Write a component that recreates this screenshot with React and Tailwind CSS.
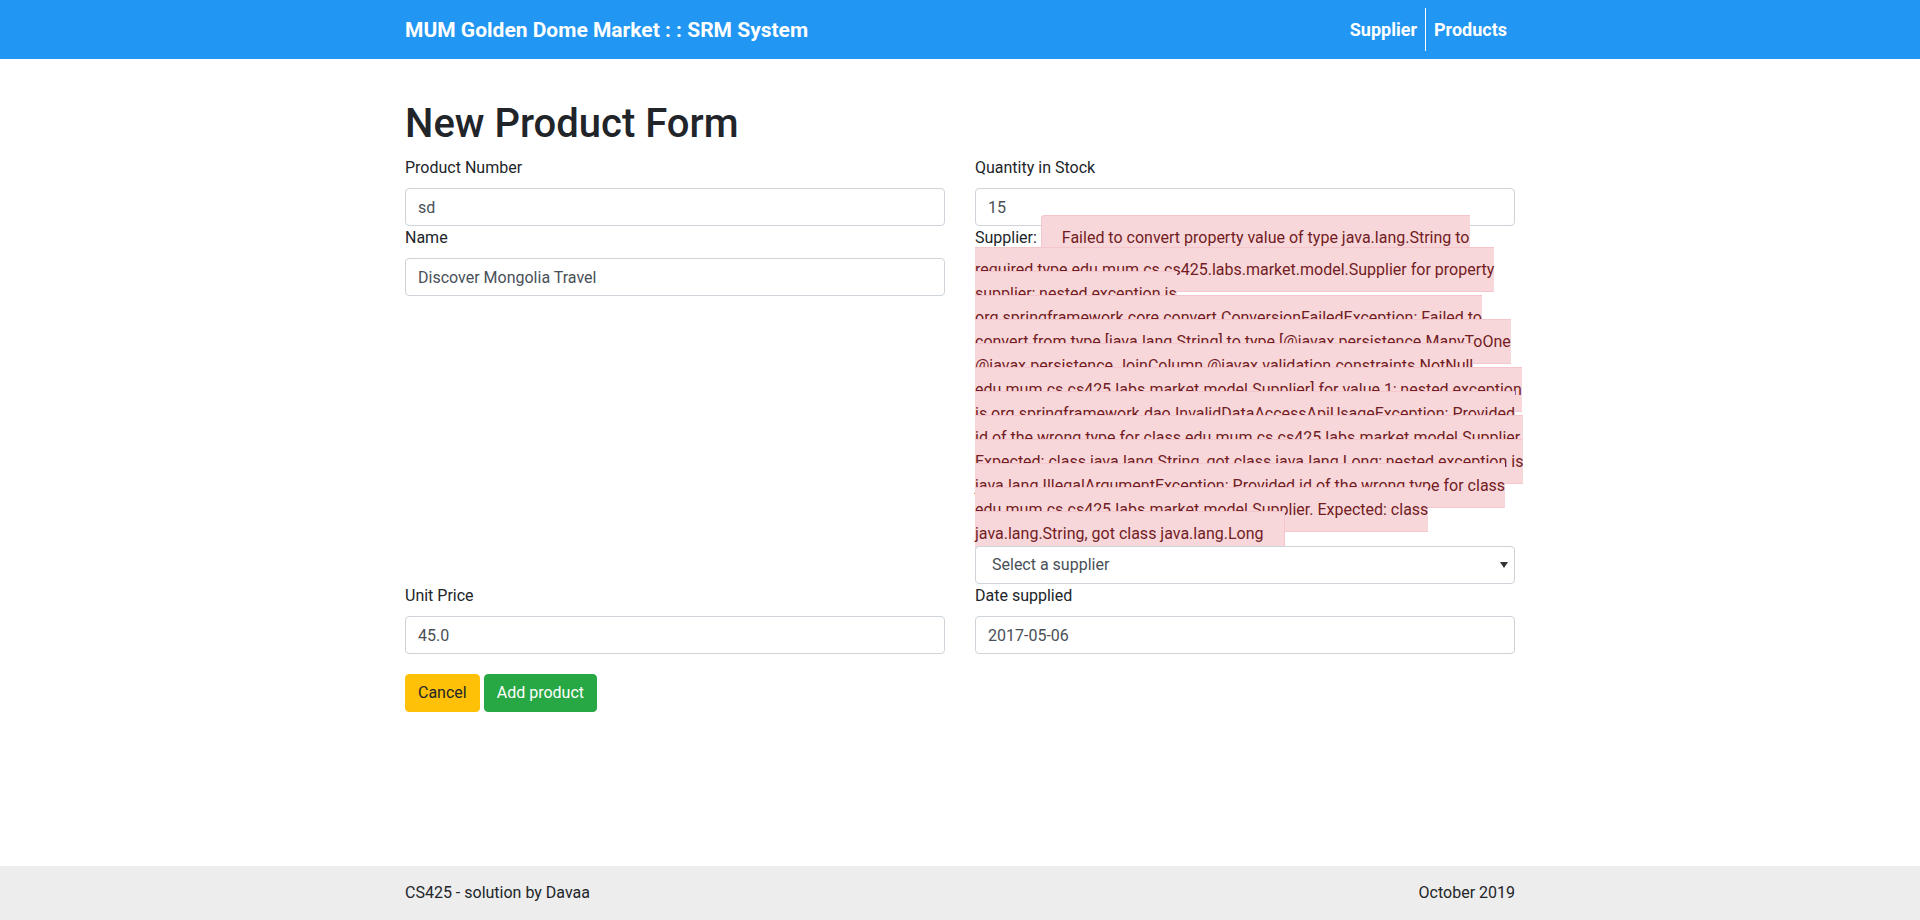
import { Fragment } from 'react'

const errorLines = [
    'Failed to convert property value of type java.lang.String to',
    'required type edu.mum.cs.cs425.labs.market.model.Supplier for property',
    'supplier; nested exception is',
    'org.springframework.core.convert.ConversionFailedException: Failed to',
    'convert from type [java.lang.String] to type [@javax.persistence.ManyToOne',
    '@javax.persistence.JoinColumn @javax.validation.constraints.NotNull',
    'edu.mum.cs.cs425.labs.market.model.Supplier] for value 1; nested exception',
    'is org.springframework.dao.InvalidDataAccessApiUsageException: Provided',
    'id of the wrong type for class edu.mum.cs.cs425.labs.market.model.Supplier.',
    'Expected: class java.lang.String, got class java.lang.Long; nested exception is',
    'java.lang.IllegalArgumentException: Provided id of the wrong type for class',
    'edu.mum.cs.cs425.labs.market.model.Supplier. Expected: class',
    'java.lang.String, got class java.lang.Long',
]

// ─── Form bits ────────────────────────────────────────────────────────────────
function Label({ children }) {
    return <label className="inline-block mb-2">{children}</label>
}

function Input({ value }) {
    return (
        <input
            defaultValue={value}
            className="block w-full h-[38px] px-3 bg-white border border-[#ced4da] rounded-[4px] text-[#495057] outline-none"
        />
    )
}

function Field({ label, value }) {
    return (
        <div>
            <Label>{label}</Label>
            <Input value={value} />
        </div>
    )
}

export default function App() {
    return (
        <div className="min-h-screen flex flex-col bg-white text-[#212529] text-[16px] leading-6 font-['Roboto','Liberation_Sans',sans-serif]">

            {/* ── Navbar ─────────────────────────────────────────── */}
            <nav className="bg-[#2196f3] py-2">
                <div className="w-[1140px] mx-auto px-[15px] flex items-center justify-between">
                    <a className="text-white font-bold text-[21px] leading-[30px]">MUM Golden Dome Market : : SRM System</a>
                    <ul className="flex items-center">
                        <li className="border-r border-white">
                            <a className="block px-2 py-2 text-white font-bold text-[18px] leading-[27px]">Supplier</a>
                        </li>
                        <li>
                            <a className="block px-2 py-2 text-white font-bold text-[18px] leading-[27px]">Products</a>
                        </li>
                    </ul>
                </div>
            </nav>

            {/* ── Form ───────────────────────────────────────────── */}
            <main className="flex-1">
                <div className="w-[1140px] mx-auto px-[15px] pt-[41px]">
                    <h1 className="text-[40px] leading-[48px] font-medium mb-2">New Product Form</h1>

                    <div className="grid grid-cols-2 gap-x-[30px] items-start">
                        <div>
                            <Field label="Product Number" value="sd" />
                            <Field label="Name" value="Discover Mongolia Travel" />
                        </div>
                        <div>
                            <Field label="Quantity in Stock" value="15" />
                            <div>
                                <Label>Supplier:</Label>{' '}
                                <span className="whitespace-nowrap bg-[#f8d7da] border border-[#f5c6cb] rounded-[4px] px-5 py-3 text-[#721c24]">
                                    {errorLines.map((line, i) => (
                                        <Fragment key={i}>
                                            {i > 0 && <br />}
                                            {line}
                                        </Fragment>
                                    ))}
                                </span>
                                <div className="relative">
                                    <select className="block w-full h-[38px] pl-4 pr-8 bg-white border border-[#ced4da] rounded-[4px] text-[#495057] appearance-none outline-none">
                                        <option>Select a supplier</option>
                                    </select>
                                    <svg className="absolute right-[7px] top-[16px] w-[8px] h-[6px]" viewBox="0 0 8 6">
                                        <path d="M0 0 L8 0 L4 6 Z" fill="#333" />
                                    </svg>
                                </div>
                            </div>
                        </div>
                    </div>

                    <div className="grid grid-cols-2 gap-x-[30px]">
                        <Field label="Unit Price" value="45.0" />
                        <Field label="Date supplied" value="2017-05-06" />
                    </div>

                    <div className="flex gap-1 mt-5">
                        <button className="h-[38px] px-3 rounded-[4px] bg-[#ffc107] border border-[#ffc107] text-[#212529]">Cancel</button>
                        <button className="h-[38px] px-3 rounded-[4px] bg-[#28a745] border border-[#28a745] text-white">Add product</button>
                    </div>
                </div>
            </main>

            {/* ── Footer ─────────────────────────────────────────── */}
            <footer className="bg-[#ededed] h-[54px] flex items-center">
                <div className="w-[1140px] mx-auto px-[15px] flex justify-between">
                    <span>CS425 - solution by Davaa</span>
                    <span>October 2019</span>
                </div>
            </footer>
        </div>
    )
}
